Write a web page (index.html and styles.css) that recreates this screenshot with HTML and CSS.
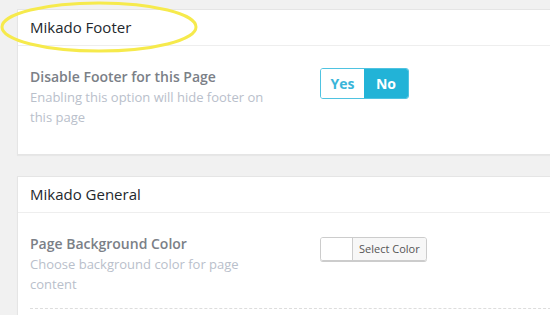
FILE: index.html
```html
<!DOCTYPE html>
<html lang="en">
<head>
    <meta charset="UTF-8">
    <meta name="viewport" content="width=device-width, initial-scale=1.0">
    <title>Mikado Meta Boxes</title>
    <link rel="stylesheet" href="styles.css">
</head>
<body>
    <div class="wrap">
        <div class="card">
            <div class="card-head">Mikado Footer</div>
            <div class="card-body">
                <div class="option">
                    <div class="option-info">
                        <div class="option-title">Disable Footer for this Page</div>
                        <div class="option-desc">Enabling this option will hide footer on this page</div>
                    </div>
                    <div class="option-field">
                        <div class="switch">
                            <span class="switch-yes">Yes</span>
                            <span class="switch-no">No</span>
                        </div>
                    </div>
                </div>
            </div>
        </div>

        <div class="card">
            <div class="card-head">Mikado General</div>
            <div class="card-body body-long">
                <div class="option option-dashed">
                    <div class="option-info">
                        <div class="option-title">Page Background Color</div>
                        <div class="option-desc">Choose background color for page content</div>
                    </div>
                    <div class="option-field field-color">
                        <div class="color-picker">
                            <span class="color-swatch"></span>
                            <span class="color-btn">Select Color</span>
                        </div>
                    </div>
                </div>
            </div>
        </div>

        <!-- highlight ring drawn over the first heading -->
        <svg class="highlight" width="200" height="56" viewBox="0 0 200 56">
            <ellipse cx="99" cy="27" rx="97" ry="24" fill="none" stroke="#f6ea4c" stroke-width="3"/>
        </svg>
    </div>
</body>
</html>
```

FILE: styles.css
```css
body {
    margin: 0;
    font-family: "Open Sans", Arial, sans-serif;
    background: #f1f1f1;
    overflow: hidden;
}

.wrap {
    position: relative;
    padding: 9px 0 0 17px;
}

.card {
    width: 560px;
    background: #fff;
    border: 1px solid #e5e5e5;
    box-shadow: 0 1px 1px rgba(0, 0, 0, 0.04);
    margin-bottom: 21px;
}

.card-head {
    height: 35px;
    line-height: 35px;
    padding-left: 12px;
    font-size: 15px;
    color: #23282d;
    border-bottom: 1px solid #eee;
}

.card-body {
    padding: 0 12px 11px;
}

.body-long {
    padding-bottom: 40px;
}

.option {
    display: flex;
    align-items: flex-start;
    padding: 21px 0 16px;
}

.option-dashed {
    padding-bottom: 14px;
    border-bottom: 1px dashed #ddd;
}

.option-info {
    width: 290px;
}

.option-title {
    font-size: 14px;
    font-weight: 600;
    line-height: 20px;
    color: #7b8087;
}

.option-desc {
    width: 240px;
    font-size: 13px;
    line-height: 20px;
    color: #b9c0cb;
}

.option-field {
    padding-top: 1px;
}

.field-color {
    padding-top: 3px;
}

.switch {
    display: flex;
    height: 29px;
    border: 1px solid #4fc3e1;
    border-radius: 3px;
    overflow: hidden;
    font-size: 14px;
    font-weight: 700;
    line-height: 29px;
}

.switch-yes {
    width: 43px;
    text-align: center;
    color: #3ab5d9;
    background: #fff;
}

.switch-no {
    width: 44px;
    text-align: center;
    color: #fff;
    background: #22b3d7;
}

.color-picker {
    display: flex;
    height: 22px;
    border: 1px solid #ccc;
    border-radius: 3px;
    box-shadow: 0 1px 0 #ccc;
    overflow: hidden;
}

.color-swatch {
    width: 31px;
    background: #fff;
    border-right: 1px solid #ccc;
}

.color-btn {
    padding: 0 6px;
    font-size: 11px;
    line-height: 22px;
    color: #555;
    background: #f7f7f7;
}

.highlight {
    position: absolute;
    left: 0;
    top: 0;
}
```
